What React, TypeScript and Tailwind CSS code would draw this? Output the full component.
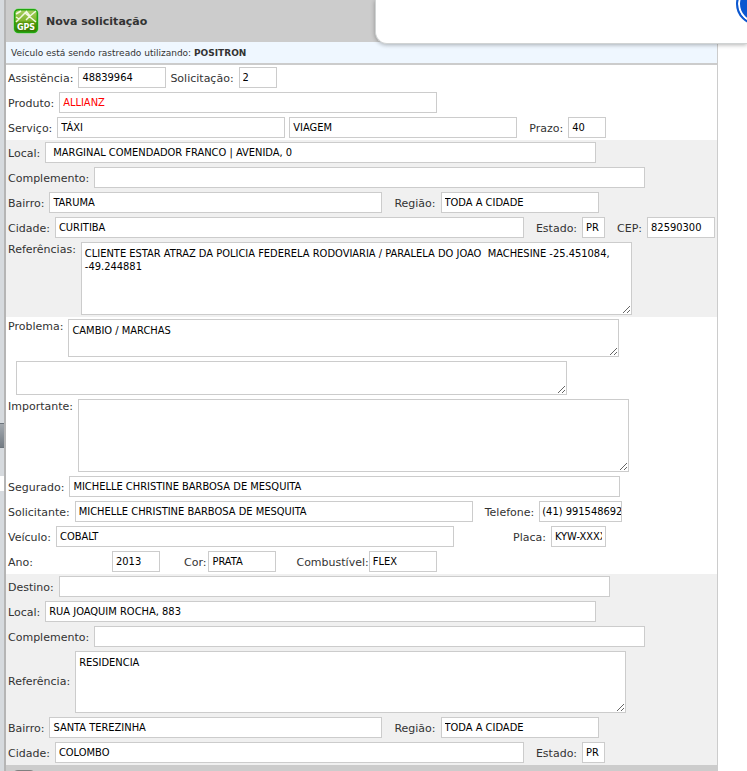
import type { ReactNode } from "react";

type FieldProps = {
  id: string;
  label?: string;
  value?: string;
  width: string;
  className?: string;
  gap?: string;
  inputClass?: string;
};

function Row({ children, className = "pl-0.5" }: { children: ReactNode; className?: string }) {
  return <div className={`flex items-center py-0.5 ${className}`}>{children}</div>;
}

function Field({
  id,
  label,
  value = "",
  width,
  className = "",
  gap = "gap-[5px]",
  inputClass = "px-[3px] text-black",
}: FieldProps) {
  return (
    <div className={`flex items-center ${gap} ${className}`}>
      {label && (
        <label htmlFor={id} className="shrink-0 pt-0.5 leading-[19px] whitespace-nowrap">
          {label}
        </label>
      )}
      <input
        id={id}
        type="text"
        aria-label={label ? undefined : id}
        defaultValue={value}
        className={`h-[21px] border border-[#ccc] bg-white font-['DejaVu_Sans_Condensed','DejaVu_Sans',sans-serif] text-[11px] outline-none ${width} ${inputClass}`}
      />
    </div>
  );
}

type AreaProps = {
  id: string;
  label?: string;
  value?: string;
  height: string;
  align?: string;
};

function Area({ id, label, value = "", height, align = "items-start" }: AreaProps) {
  return (
    <div className={`flex gap-[5px] ${align}`}>
      {label && (
        <label htmlFor={id} className="shrink-0 whitespace-nowrap">
          {label}
        </label>
      )}
      <textarea
        id={id}
        aria-label={label ? undefined : id}
        defaultValue={value}
        className={`block w-[551px] resize border border-[#ccc] bg-white px-[3px] py-1 font-['DejaVu_Sans_Condensed','DejaVu_Sans',sans-serif] text-[11px] leading-[13px] text-black outline-none ${height}`}
      />
    </div>
  );
}

function GpsIcon() {
  return (
    <svg width="26" height="26" viewBox="0 0 26 26" className="shrink-0">
      <defs>
        <linearGradient id="gps" x1="0" y1="0" x2="0" y2="1">
          <stop offset="0" stopColor="#a9cf62" />
          <stop offset="0.5" stopColor="#7fb52c" />
          <stop offset="0.55" stopColor="#5a9a0c" />
          <stop offset="1" stopColor="#2f7600" />
        </linearGradient>
      </defs>
      <rect x="0.5" y="0.5" width="25" height="25" rx="5" fill="#6be45a" opacity="0.8" />
      <rect x="1.7" y="1.7" width="22.6" height="22.6" rx="3.5" fill="url(#gps)" stroke="#22a511" strokeWidth="1.4" />
      <path
        d="M3 14 L14 3 M3 6 L8 3 M8 9 L12 5 L23 14 M13 3 L17 8 L23 3 M13 12 L17 8 M3 9 L6 11"
        stroke="#f2f9e2"
        strokeWidth="1.5"
        fill="none"
      />
      <text x="13" y="21.5" textAnchor="middle" fontFamily="DejaVu Sans" fontWeight="bold" fontSize="8" fill="#fff">
        GPS
      </text>
    </svg>
  );
}

export default function App() {
  return (
    <div className="relative flex h-screen overflow-hidden bg-white font-['DejaVu_Sans',Verdana,sans-serif] text-[11px] text-[#333]">
      {/* Barra lateral recolhida */}
      <div className="flex w-[6px] shrink-0 flex-col border-r-2 border-[#b5b5b5] bg-[#d6dade]">
        <div className="mt-[423px] h-[25px] border-y border-[#6c747c] bg-linear-to-b from-[#a3a9af] to-[#747c84]" />
        <div className="mt-7 h-[15px] bg-white" />
      </div>

      <main className="mr-[29px] min-w-0 flex-1 border-r border-[#ccc]">
        <header className="flex h-[42px] items-center gap-[7px] bg-[#ccc] pl-[7px]">
          <GpsIcon />
          <h1 className="pt-0.5 font-bold">Nova solicitação</h1>
        </header>
        <p className="h-[23px] border-b-2 border-[#ccc] bg-[#eff7ff] pl-[5px] text-[9px] leading-[22px]">
          Veículo está sendo rastreado utilizando: <b>POSITRON</b>
        </p>

        <form>
          <section>
            <Row>
              <Field id="assistencia" label="Assistência:" value="48839964" width="w-[88px]" />
              <Field id="solicitacao" label="Solicitação:" value="2" width="w-[38px]" className="ml-1" />
            </Row>
            <Row>
              <Field id="produto" label="Produto:" value="ALLIANZ" width="w-[378px]" inputClass="px-[3px] text-[#f00]" />
            </Row>
            <Row>
              <Field id="servico" label="Serviço:" value="TÁXI" width="w-[228px]" />
              <Field id="tipo" value="VIAGEM" width="w-[228px]" className="ml-1" />
              <Field id="prazo" label="Prazo:" value="40" width="w-[38px]" className="ml-3" />
            </Row>
          </section>

          <section className="bg-[#f0f0f0]">
            <Row>
              <Field id="local" label="Local:" value="MARGINAL COMENDADOR FRANCO | AVENIDA, 0" width="w-[551px]" inputClass="px-[7px] text-black" />
            </Row>
            <Row>
              <Field id="complemento" label="Complemento:" width="w-[551px]" />
            </Row>
            <Row>
              <Field id="bairro" label="Bairro:" value="TARUMA" width="w-[333px]" />
              <Field id="regiao" label="Região:" value="TODA A CIDADE" width="w-[158px]" className="ml-3" />
            </Row>
            <Row>
              <Field id="cidade" label="Cidade:" value="CURITIBA" width="w-[469px]" />
              <Field id="estado" label="Estado:" value="PR" width="w-[23px]" className="ml-3" />
              <Field id="cep" label="CEP:" value="82590300" width="w-[68px]" className="ml-3" />
            </Row>
            <Row>
              <Area
                id="referencias"
                label="Referências:"
                height="h-[73px]"
                value="CLIENTE ESTAR ATRAZ DA POLICIA FEDERELA RODOVIARIA / PARALELA DO JOAO  MACHESINE -25.451084, -49.244881"
              />
            </Row>
          </section>

          <section>
            <Row>
              <Area id="problema" label="Problema:" height="h-[38px]" value="CAMBIO / MARCHAS" />
            </Row>
            <Row className="pl-[10px]">
              <Area id="observacao" height="h-[34px]" />
            </Row>
            <Row>
              <Area id="importante" label="Importante:" height="h-[73px]" />
            </Row>
            <Row>
              <Field id="segurado" label="Segurado:" value="MICHELLE CHRISTINE BARBOSA DE MESQUITA" width="w-[551px]" />
            </Row>
            <Row>
              <Field id="solicitante" label="Solicitante:" value="MICHELLE CHRISTINE BARBOSA DE MESQUITA" width="w-[398px]" />
              <Field id="telefone" label="Telefone:" value="(41) 991548692" width="w-[83px]" className="ml-3" inputClass="pl-0.5 text-black" />
            </Row>
            <Row>
              <Field id="veiculo" label="Veículo:" value="COBALT" width="w-[398px]" />
              <Field id="placa" label="Placa:" value="KYW-XXXX" width="w-[55px]" className="ml-[59px]" />
            </Row>
            <Row>
              <Field id="ano" label="Ano:" value="2013" width="w-[48px]" className="w-[152px] justify-between" />
              <Field id="cor" label="Cor:" value="PRATA" width="w-[68px]" gap="gap-0.5" className="ml-6" />
              <Field id="combustivel" label="Combustível:" value="FLEX" width="w-[68px]" gap="gap-0" className="ml-5" />
            </Row>
          </section>

          <section className="bg-[#f0f0f0]">
            <Row>
              <Field id="destino" label="Destino:" width="w-[551px]" />
            </Row>
            <Row>
              <Field id="destino-local" label="Local:" value="RUA JOAQUIM ROCHA, 883" width="w-[551px]" />
            </Row>
            <Row>
              <Field id="destino-complemento" label="Complemento:" width="w-[551px]" />
            </Row>
            <Row>
              <Area id="destino-referencia" label="Referência:" height="h-[62px]" align="items-center" value="RESIDENCIA" />
            </Row>
            <Row>
              <Field id="destino-bairro" label="Bairro:" value="SANTA TEREZINHA" width="w-[333px]" />
              <Field id="destino-regiao" label="Região:" value="TODA A CIDADE" width="w-[158px]" className="ml-3" />
            </Row>
            <Row>
              <Field id="destino-cidade" label="Cidade:" value="COLOMBO" width="w-[469px]" />
              <Field id="destino-estado" label="Estado:" value="PR" width="w-[23px]" className="ml-3" />
            </Row>
          </section>
        </form>

        <div className="h-[42px] bg-[#ccc] pt-[5px] pl-[6px]">
          <div className="h-6 w-6 rounded-md bg-[#808080]" />
        </div>
      </main>

      {/* Painel flutuante sobre o cabeçalho */}
      <div className="absolute top-0 right-0 left-[375px] h-11 overflow-hidden rounded-bl-xl border-b border-l border-[#d0d3d3] bg-white shadow-[0_1px_4px_rgba(0,0,0,0.3)]">
        <div className="absolute -top-[17px] -right-[31px] h-[42px] w-[42px] rounded-full border-2 border-[#0b57d0] bg-[#0b57d0] shadow-[inset_0_0_0_2px_#fff]" />
      </div>
    </div>
  );
}
